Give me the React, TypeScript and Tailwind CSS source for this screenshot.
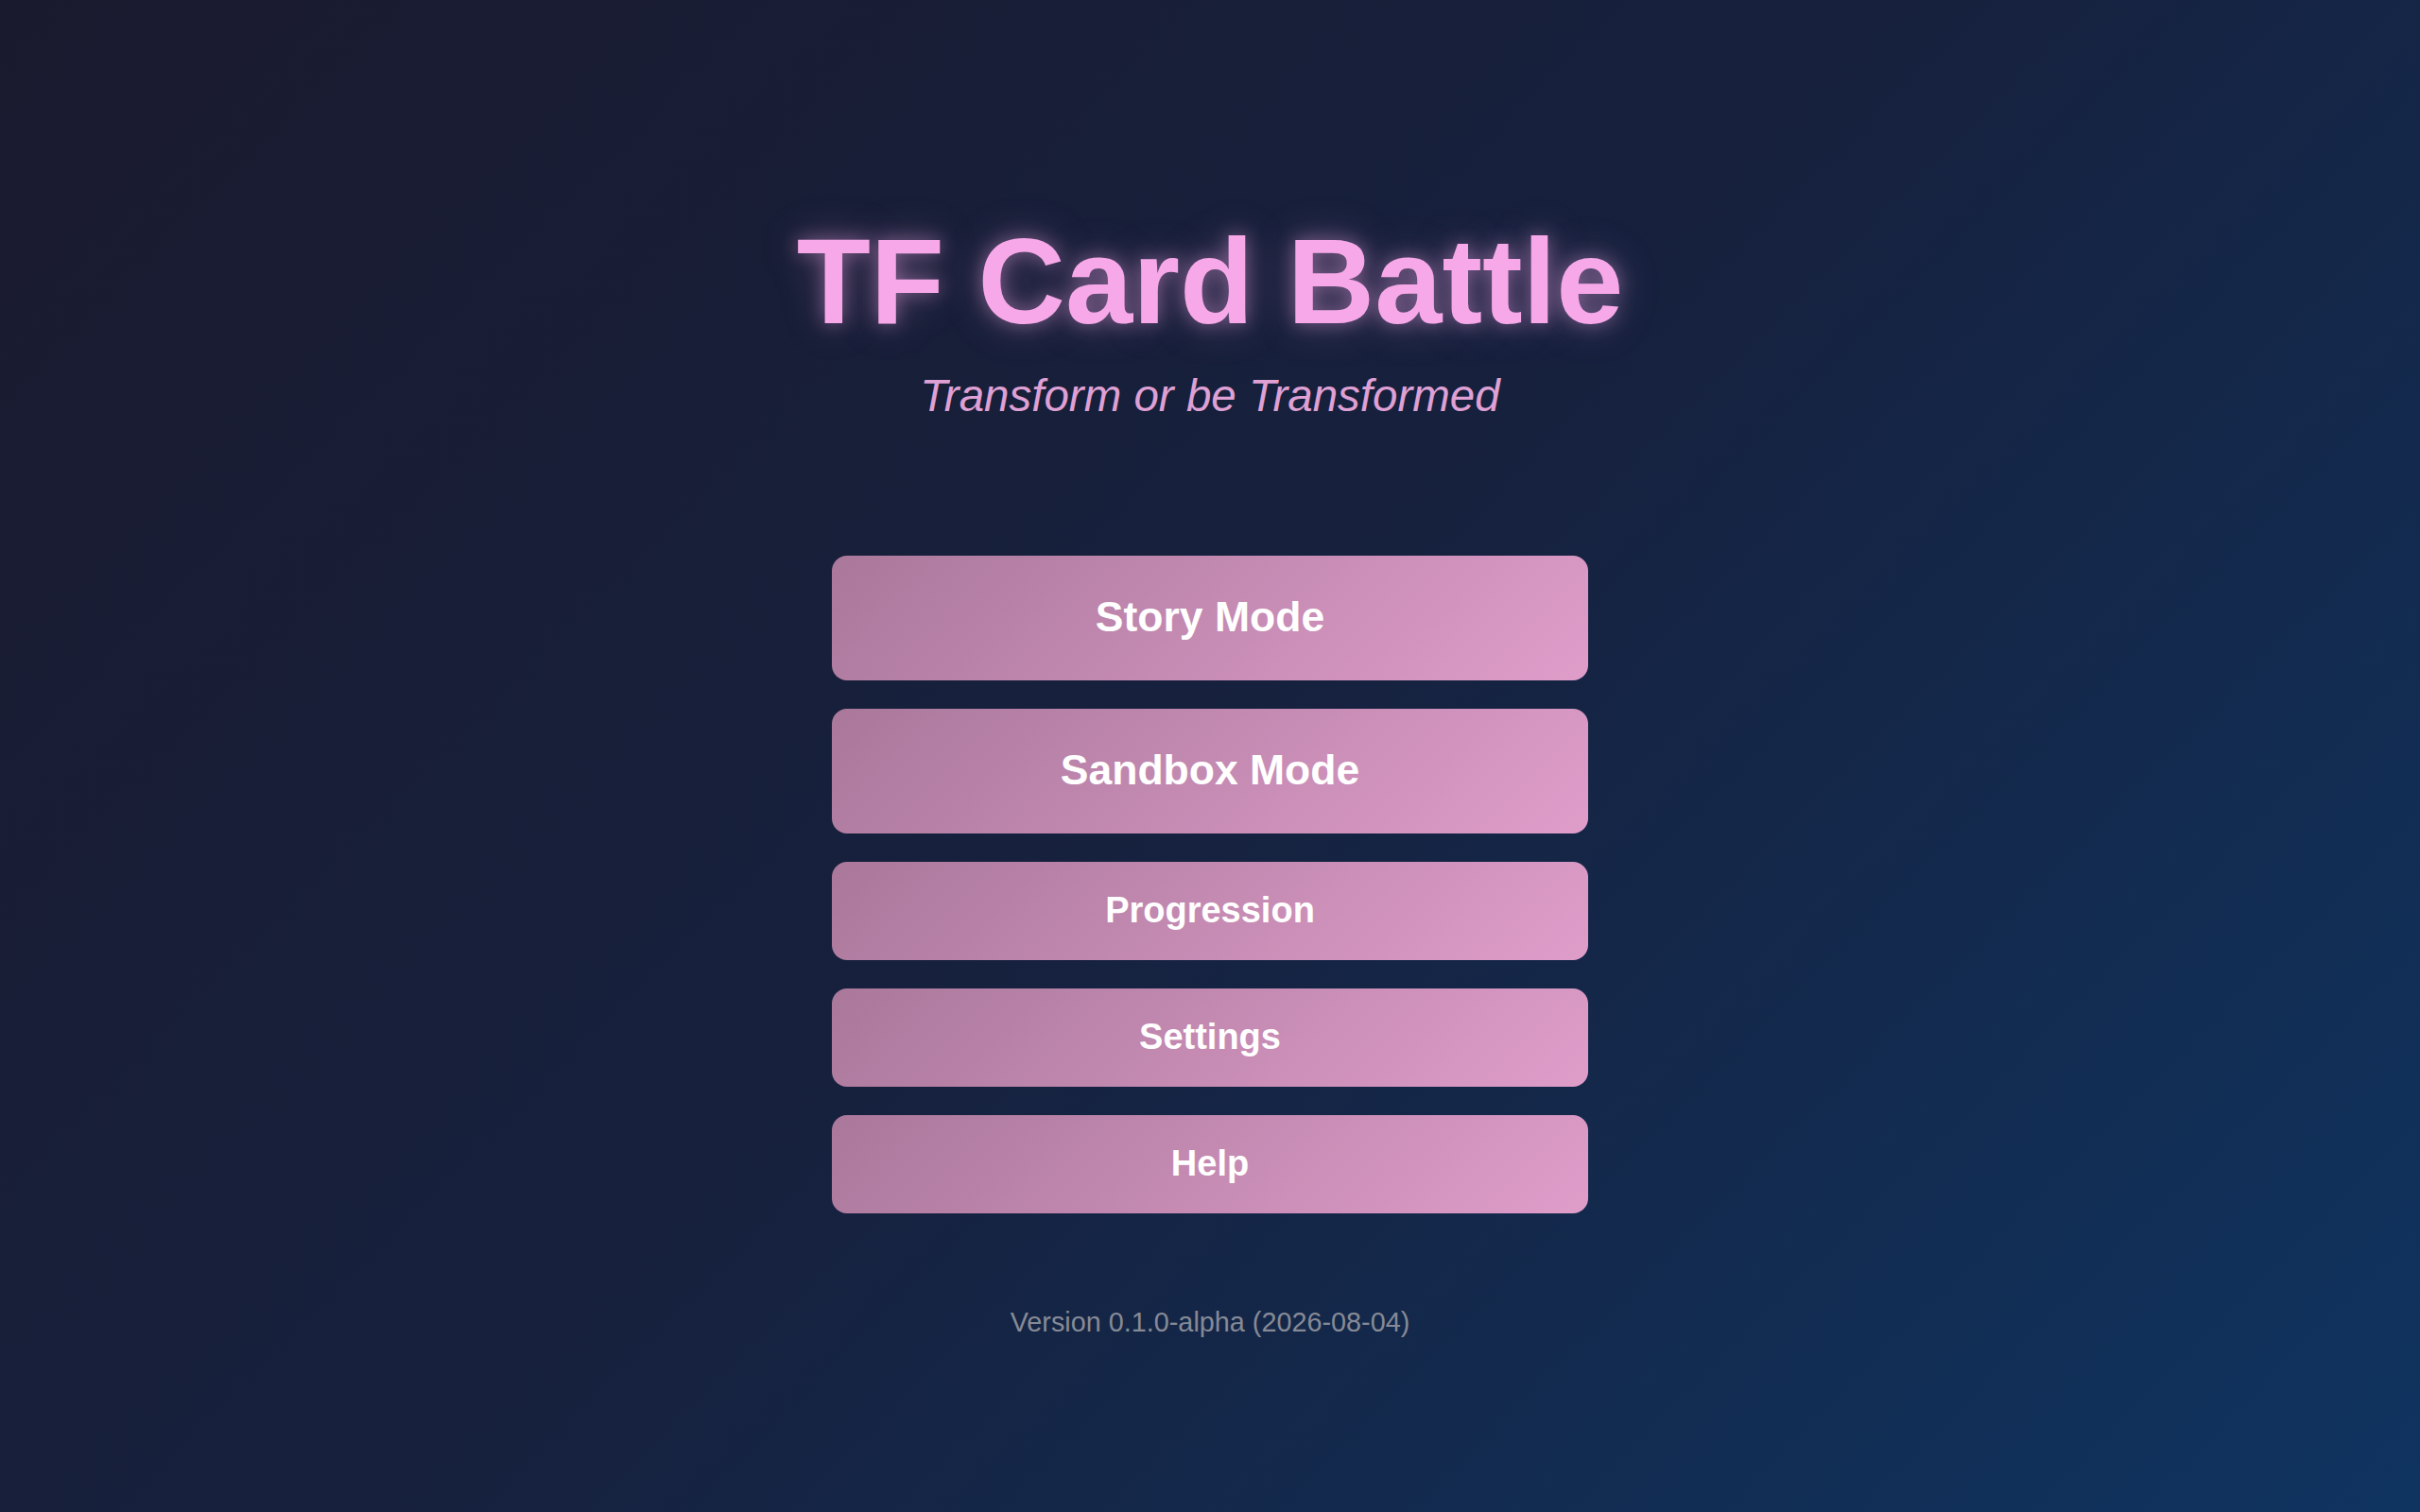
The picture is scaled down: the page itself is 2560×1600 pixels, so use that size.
const menu = [
  { label: 'Story Mode', big: true },
  { label: 'Sandbox Mode', big: true },
  { label: 'Progression', big: false },
  { label: 'Settings', big: false },
  { label: 'Help', big: false },
];

export default function App() {
  return (
    <div className="min-h-screen w-full bg-[linear-gradient(135deg,#1a1a2e_0%,#16213e_50%,#0f3460_100%)] font-['Liberation_Sans',Arial,sans-serif]">
      <div className="flex flex-col items-center pt-[224px] pb-[100px]">
        {/* Title */}
        <h1 className="text-[128px] leading-[1.15] font-bold text-[#f7a8e8] [text-shadow:0_0_20px_rgba(247,168,232,0.45),0_0_45px_rgba(247,168,232,0.25)]">
          TF Card Battle
        </h1>
        <p className="mt-[21px] text-[47.5px] leading-[1.15] italic text-[#dfa0d4]">
          Transform or be Transformed
        </p>

        {/* Menu */}
        <div className="mt-[141px] flex w-[800px] flex-col gap-[30px]">
          {menu.map((item) => (
            <button
              key={item.label}
              className={
                item.big
                  ? 'flex h-[132px] w-full items-center justify-center rounded-[16px] bg-[linear-gradient(135deg,#aa789b,#df9dca)] text-[44.5px] font-bold text-white'
                  : 'flex h-[104px] w-full items-center justify-center rounded-[16px] bg-[linear-gradient(135deg,#aa789b,#df9dca)] text-[38px] font-bold text-white'
              }
            >
              {item.label}
            </button>
          ))}
        </div>

        <p className="mt-[99px] text-[28.8px] leading-[1.15] text-[#868a96]">
          Version 0.1.0-alpha (2026-08-04)
        </p>
      </div>
    </div>
  );
}
